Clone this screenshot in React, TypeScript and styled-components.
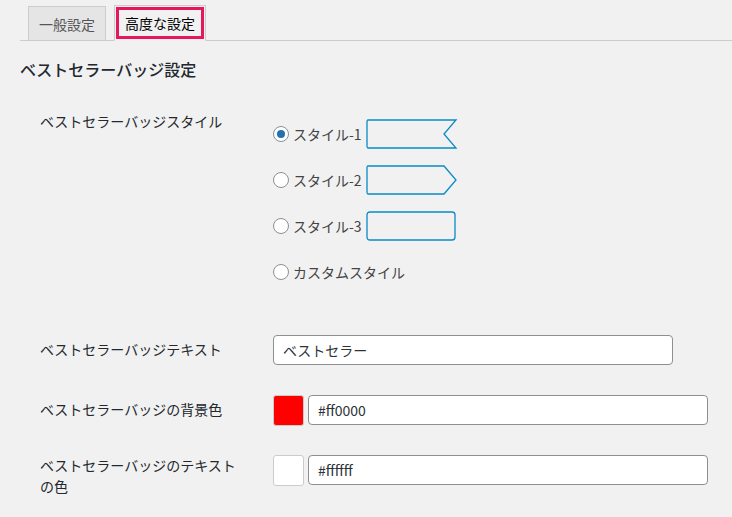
import React from "react";
import styled, { createGlobalStyle } from "styled-components";

const Global = createGlobalStyle`
  body {
    margin: 0;
    background: #f1f1f1;
    font-family: "Noto Sans CJK JP", "Open Sans", sans-serif;
    color: #23282d;
  }
`;

const Page = styled.div`
  padding: 5px 0 0 20px;
`;

const Tabs = styled.div`
  display: flex;
  gap: 8px;
  padding-left: 8px;
  border-bottom: 1px solid #ccc;
`;

const Tab = styled.div<{ $active?: boolean }>`
  box-sizing: border-box;
  padding: 0 10px;
  display: flex;
  align-items: center;
  font-size: 14px;
  margin-bottom: -1px;
  background: ${(p) => (p.$active ? "#f1f1f1" : "#e5e5e5")};
  color: ${(p) => (p.$active ? "#000" : "#555")};
  border: 1px solid #ccc;
  border-bottom: ${(p) => (p.$active ? "1px solid #f1f1f1" : "1px solid #ccc")};
  outline: ${(p) => (p.$active ? "3px solid #e6175c" : "none")};
  outline-offset: -5px;
  height: ${(p) => (p.$active ? "36px" : "35px")};
  margin-top: ${(p) => (p.$active ? "0" : "1px")};
`;

const Heading = styled.h2`
  margin: 16px 0 0;
  font-size: 16px;
  font-weight: 500;
`;

const Row = styled.div<{ $top: number }>`
  display: grid;
  grid-template-columns: 253px 1fr;
  margin-top: ${(p) => p.$top}px;
  align-items: start;
`;

const Label = styled.div<{ $pad?: number }>`
  padding: ${(p) => p.$pad ?? 0}px 0 0 20px;
  max-width: 205px;
  font-size: 14px;
  line-height: 21px;
`;

const Options = styled.div`
  display: flex;
  flex-direction: column;
  gap: 16px;
  padding-top: 8px;
`;

const Option = styled.label`
  display: flex;
  align-items: center;
  height: 30px;
  font-size: 14px;
  color: #444;
`;

const Radio = styled.span<{ $on?: boolean }>`
  width: 14px;
  height: 14px;
  border-radius: 50%;
  border: 1px solid #8c8f94;
  background: #fff;
  margin-right: 4px;
  display: flex;
  align-items: center;
  justify-content: center;
  &::after {
    content: "";
    width: 8px;
    height: 8px;
    border-radius: 50%;
    background: ${(p) => (p.$on ? "#2271b1" : "transparent")};
  }
`;

const Badge = styled.svg`
  margin-left: 4px;
`;

const TextInput = styled.div<{ $w: number }>`
  width: ${(p) => p.$w}px;
  height: 30px;
  box-sizing: border-box;
  background: #fff;
  border: 1px solid #8c8f94;
  border-radius: 4px;
  padding: 0 9px;
  display: flex;
  align-items: center;
  font-size: 14px;
  color: #2c3338;
`;

const ColorRow = styled.div`
  display: flex;
  gap: 4px;
`;

const Swatch = styled.div<{ $c: string }>`
  width: 31px;
  height: 31px;
  box-sizing: border-box;
  border: 1px solid #ccc;
  border-radius: 3px;
  background: ${(p) => p.$c};
`;

const badges = [
  "M2 1 H90 L78 15 L90 29 H2 Q1 29 1 27 V3 Q1 1 2 1 Z",
  "M2 1 H78 L90 15 L78 29 H2 Q1 29 1 27 V3 Q1 1 2 1 Z",
  "M4 1 H86 Q89 1 89 4 V26 Q89 29 86 29 H4 Q1 29 1 26 V4 Q1 1 4 1 Z",
];

export default function App() {
  return (
    <Page>
      <Global />
      <Tabs>
        <Tab>一般設定</Tab>
        <Tab $active>高度な設定</Tab>
      </Tabs>
      <Heading>ベストセラーバッジ設定</Heading>
      <Row $top={30}>
        <Label>ベストセラーバッジスタイル</Label>
        <Options>
          {badges.map((d, i) => (
            <Option key={i}>
              <Radio $on={i === 0} />
              スタイル-{i + 1}
              <Badge width="92" height="31" viewBox="0 0 92 31">
                <path d={d} fill="none" stroke="#0a8ac8" strokeWidth="1.3" />
              </Badge>
            </Option>
          ))}
          <Option>
            <Radio />
            カスタムスタイル
          </Option>
        </Options>
      </Row>
      <Row $top={48}>
        <Label $pad={4}>ベストセラーバッジテキスト</Label>
        <TextInput $w={400}>ベストセラー</TextInput>
      </Row>
      <Row $top={30}>
        <Label $pad={4}>ベストセラーバッジの背景色</Label>
        <ColorRow>
          <Swatch $c="#ff0000" />
          <TextInput $w={400}>#ff0000</TextInput>
        </ColorRow>
      </Row>
      <Row $top={29}>
        <Label>ベストセラーバッジのテキストの色</Label>
        <ColorRow>
          <Swatch $c="#ffffff" />
          <TextInput $w={400}>#ffffff</TextInput>
        </ColorRow>
      </Row>
    </Page>
  );
}
